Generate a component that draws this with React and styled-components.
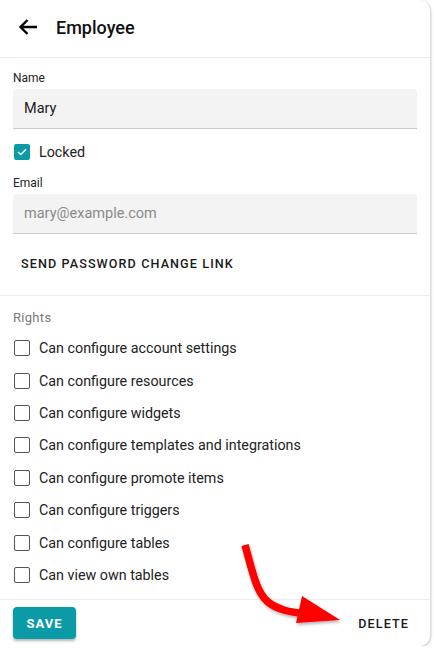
import React, { useState } from 'react'
import styled, { createGlobalStyle } from 'styled-components'

const GlobalStyle = createGlobalStyle`
  html, body {
    margin: 0;
    padding: 0;
    background: #ffffff;
    font-family: Roboto, "Liberation Sans", sans-serif;
    color: #1c1c1c;
  }
`

const Card = styled.div`
  position: relative;
  width: 430px;
  height: 646px;
  background: #fff;
  border-radius: 0 10px 10px 0;
  box-shadow: 1px 1px 3px rgba(0, 0, 0, 0.22);
  display: flex;
  flex-direction: column;
  box-sizing: border-box;
  overflow: hidden;
`

const Header = styled.div`
  height: 58px;
  display: flex;
  align-items: center;
  padding: 0 0 3px 17px;
  gap: 17px;
  border-bottom: 1px solid #ececec;
  box-sizing: border-box;
  flex-shrink: 0;
`

const Title = styled.h1`
  margin: 0;
  font-size: 18px;
  font-weight: 500;
  color: #111;
`

const Section = styled.div`
  padding: ${(p) => p.$pad || '13px 13px 0'};
  display: flex;
  flex-direction: column;
  border-bottom: ${(p) => (p.$divider ? '1px solid #ececec' : 'none')};
`

const Label = styled.div`
  font-size: 12px;
  line-height: 16px;
  color: #222;
  margin-bottom: 3px;
`

const SectionTitle = styled.div`
  font-size: 13px;
  line-height: 16px;
  letter-spacing: 0.3px;
  color: #7a7a7a;
  margin-bottom: 6px;
`

const Input = styled.input`
  height: 40px;
  width: 100%;
  box-sizing: border-box;
  background: #f3f3f3;
  border: none;
  border-bottom: 1px solid #c9c9c9;
  border-radius: 4px 4px 0 0;
  padding: 0 11px;
  font-family: inherit;
  font-size: 14.5px;
  color: #1c1c1c;
  outline: none;
  &::placeholder {
    color: #8a8a8a;
  }
`

const CheckRow = styled.label`
  display: flex;
  align-items: center;
  gap: 9px;
  height: ${(p) => p.$h || 32.4}px;
  padding-left: 1px;
  font-size: 14.3px;
  color: #222;
  cursor: pointer;
`

const Box = styled.span`
  width: 16px;
  height: 16px;
  box-sizing: border-box;
  border-radius: 2px;
  border: ${(p) => (p.$on ? 'none' : '1.5px solid #555')};
  background: ${(p) => (p.$on ? '#0b9ba6' : '#fff')};
  display: flex;
  align-items: center;
  justify-content: center;
  flex-shrink: 0;
`

const TextButton = styled.button`
  align-self: ${(p) => (p.$start ? 'flex-start' : 'center')};
  background: none;
  border: none;
  padding: 8px;
  margin-top: ${(p) => p.$mt || 0}px;
  font-family: inherit;
  font-size: 12.6px;
  font-weight: 500;
  letter-spacing: 1.1px;
  color: #1a1a1a;
  text-transform: uppercase;
  cursor: pointer;
`

const Footer = styled.div`
  margin-top: auto;
  height: 47px;
  border-top: 1px solid #ececec;
  display: flex;
  align-items: center;
  justify-content: space-between;
  padding: 0 13px 0 13px;
  box-sizing: border-box;
`

const SaveButton = styled.button`
  width: 63px;
  height: 32px;
  border: none;
  border-radius: 4px;
  background: #0b9ba6;
  color: #fff;
  font-family: inherit;
  font-size: 13px;
  font-weight: 700;
  letter-spacing: 1px;
  box-shadow: 0 2px 3px rgba(0, 0, 0, 0.3);
  cursor: pointer;
`

const Arrow = styled.svg`
  position: absolute;
  left: 230px;
  top: 530px;
  pointer-events: none;
  overflow: visible;
`

const Check = ({ on }) => (
  <Box $on={on}>
    {on && (
      <svg width="10" height="8" viewBox="0 0 10 8">
        <path d="M1 4 L3.8 6.6 L9 1.2" stroke="#fff" strokeWidth="1.4" fill="none" />
      </svg>
    )}
  </Box>
)

const rights = [
  'Can configure account settings',
  'Can configure resources',
  'Can configure widgets',
  'Can configure templates and integrations',
  'Can configure promote items',
  'Can configure triggers',
  'Can configure tables',
  'Can view own tables',
]

const App = () => {
  const [locked, setLocked] = useState(true)
  const [checked, setChecked] = useState({})

  return (
    <>
      <GlobalStyle />
      <Card>
        <Header>
          <svg width="22" height="22" viewBox="0 0 22 22">
            <path d="M20 11H3.5M10.5 4l-7 7 7 7" stroke="#000" strokeWidth="2.4" fill="none" />
          </svg>
          <Title>Employee</Title>
        </Header>

        <Section $divider $pad="12px 13px 16px">
          <Label>Name</Label>
          <Input defaultValue="Mary" />
          <CheckRow $h={46} onClick={() => setLocked(!locked)}>
            <Check on={locked} />
            Locked
          </CheckRow>
          <Label>Email</Label>
          <Input placeholder="mary@example.com" />
          <TextButton $start $mt={14}>Send password change link</TextButton>
        </Section>

        <Section $pad="14px 13px 0">
          <SectionTitle>Rights</SectionTitle>
          {rights.map((r) => (
            <CheckRow key={r} onClick={() => setChecked({ ...checked, [r]: !checked[r] })}>
              <Check on={!!checked[r]} />
              {r}
            </CheckRow>
          ))}
        </Section>

        <Footer>
          <SaveButton>SAVE</SaveButton>
          <TextButton>Delete</TextButton>
        </Footer>

        <Arrow width="120" height="100">
          <defs>
            <filter id="sh" x="-20%" y="-20%" width="140%" height="140%">
              <feDropShadow dx="1" dy="2" stdDeviation="1.5" floodOpacity="0.3" />
            </filter>
          </defs>
          <g filter="url(#sh)">
            <path d="M15 15 C22 40 26 62 38 72 C48 80 60 82 76 84" stroke="#ff0000" strokeWidth="7.5" fill="none" />
            <polygon points="72,66 66,93 110,90" fill="#ff0000" />
          </g>
        </Arrow>
      </Card>
    </>
  )
}

export default App
